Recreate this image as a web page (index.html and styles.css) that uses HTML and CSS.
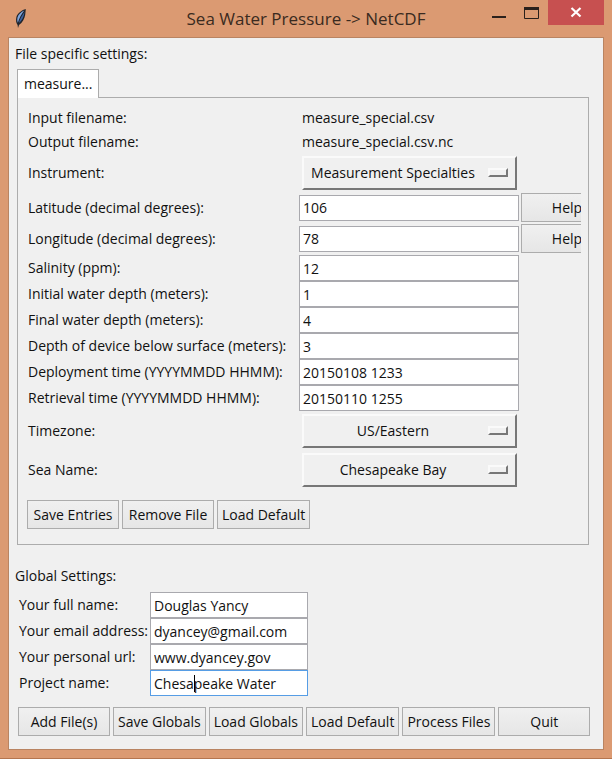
FILE: index.html
```
<!DOCTYPE html>
<html lang="en">
<head>
<meta charset="utf-8">
<title>Sea Water Pressure -&gt; NetCDF</title>
<link rel="stylesheet" href="styles.css">
</head>
<body>
<div class="window">
  <header class="titlebar">
    <svg class="feather" width="14" height="22" viewBox="0 0 14 22" aria-hidden="true">
      <path d="M11.800 1C8 2 3.600 5 2.400 9C1.700 12 2 15 3.600 17L4 20L5 17C8.500 14.500 10.500 10.500 11.200 7C11.500 5 11.500 3 11.800 1Z" fill="#20242c"/>
      <path d="M10.300 2.500C7 4 4.300 6.500 3.500 9.500C3 12 3.300 13.500 3.900 14.800C5 10.500 7.500 6 10.300 2.500Z" fill="#7fa6de"/>
      <path d="M10.500 4C8 7.500 5.800 11 4.900 15C7.800 12.500 9.900 9 10.500 4Z" fill="#3c62a0"/>
    </svg>
    <h1 class="title">Sea Water Pressure -&gt; NetCDF</h1>
    <div class="controls">
      <button class="control" type="button" aria-label="Minimize"><svg width="16" height="16" viewBox="0 0 16 16"><path d="M0 11h14v2H0z" fill="#2b211c"/></svg></button>
      <button class="control" type="button" aria-label="Maximize"><svg width="16" height="16" viewBox="0 0 16 16"><path d="M.5 2.500h14v11H.5z" fill="none" stroke="#2b211c"/><path d="M0 2h15v3H0z" fill="#2b211c"/></svg></button>
      <button class="control close" type="button" aria-label="Close"><svg width="12" height="12" viewBox="0 0 12 12"><path d="M1.500 1L10.500 9.500M10.500 1L1.500 9.500" stroke="#fff" stroke-width="2.200"/></svg></button>
    </div>
  </header>
  <main class="client">
    <h2 class="heading">File specific settings:</h2>
    <div class="tabs"><button class="tab" type="button">measure...</button></div>
    <form class="panel">
      <div class="fields">
        <div class="row text"><span>Input filename:</span><span class="value">measure_special.csv</span></div>
        <div class="row text"><span>Output filename:</span><span class="value">measure_special.csv.nc</span></div>
        <div class="row menu first"><label for="instrument">Instrument:</label><span class="option"><select id="instrument"><option>Measurement Specialties</option></select></span></div>
        <div class="row tall"><label for="lat">Latitude (decimal degrees):</label><input id="lat" type="text" value="106"><button class="button" type="button">Help</button></div>
        <div class="row tall"><label for="lon">Longitude (decimal degrees):</label><input id="lon" type="text" value="78"><button class="button" type="button">Help</button></div>
        <div class="row"><label for="salinity">Salinity (ppm):</label><input id="salinity" type="text" value="12"></div>
        <div class="row"><label for="initial">Initial water depth (meters):</label><input id="initial" type="text" value="1"></div>
        <div class="row"><label for="final">Final water depth (meters):</label><input id="final" type="text" value="4"></div>
        <div class="row"><label for="device">Depth of device below surface (meters):</label><input id="device" type="text" value="3"></div>
        <div class="row"><label for="deploy">Deployment time (YYYYMMDD HHMM):</label><input id="deploy" type="text" value="20150108 1233"></div>
        <div class="row"><label for="retrieve">Retrieval time (YYYYMMDD HHMM):</label><input id="retrieve" type="text" value="20150110 1255"></div>
        <div class="row menu"><label for="tz">Timezone:</label><span class="option"><select id="tz"><option>US/Eastern</option></select></span></div>
        <div class="row menu"><label for="sea">Sea Name:</label><span class="option"><select id="sea"><option>Chesapeake Bay</option></select></span></div>
      </div>
      <div class="buttons">
        <button class="button" type="button">Save Entries</button>
        <button class="button" type="button">Remove File</button>
        <button class="button" type="button">Load Default</button>
      </div>
    </form>
    <h2 class="heading global-heading">Global Settings:</h2>
    <form class="globals">
      <div class="row"><label for="name">Your full name:</label><input id="name" type="text" value="Douglas Yancy"></div>
      <div class="row"><label for="email">Your email address:</label><input id="email" type="text" value="dyancey@gmail.com"></div>
      <div class="row"><label for="url">Your personal url:</label><input id="url" type="text" value="www.dyancey.gov"></div>
      <div class="row"><label for="project">Project name:</label><span class="editing"><input id="project" type="text" value="Chesapeake Water"><span class="caret"></span></span></div>
    </form>
    <div class="buttons global-buttons">
      <button class="button" type="button">Add File(s)</button>
      <button class="button" type="button">Save Globals</button>
      <button class="button" type="button">Load Globals</button>
      <button class="button" type="button">Load Default</button>
      <button class="button" type="button">Process Files</button>
      <button class="button" type="button">Quit</button>
    </div>
  </main>
</div>
</body>
</html>
```
FILE: styles.css
```
*, ::after { box-sizing: border-box; }
body {
  margin: 0;
  background: #db9a72;
  color: #111;
  font: 14px/20px "Open Sans", "Noto Sans", sans-serif;
}
input, select, button { font: inherit; color: inherit; margin: 0; border-radius: 0; }
.window {
  display: flex;
  flex-direction: column;
  min-height: 100vh;
  padding: 0 8px 8px;
  border-bottom: 1px solid #b4754f;
}
.titlebar {
  display: grid;
  grid-template-columns: 120px 1fr 120px;
  height: 37px;
}
.feather { margin: 8px 0 0 6px; }
.title {
  margin: 0;
  text-align: center;
  font-size: 17px;
  font-weight: 400;
  line-height: 38px;
  color: #3a2a20;
  white-space: nowrap;
}
.controls { display: flex; justify-content: flex-end; align-items: flex-start; }
.control {
  display: flex;
  align-items: center;
  justify-content: center;
  width: 32px;
  height: 25px;
  padding: 0;
  border: 0;
  background: none;
}
.close { width: 56px; background: #c75050; }
.client {
  flex: 1;
  padding: 6px 14px 13px 8px;
  border: 1px solid #b98462;
  background: #f0f0f0;
}
.heading { margin: 0 0 0 -2px; font-size: 14px; font-weight: 400; }
.tabs { display: flex; margin: 5px 0 -1px; }
.tab {
  position: relative;
  height: 29px;
  padding: 0 6px;
  border: 1px solid #acacac;
  border-bottom: 0;
  background: #fff;
}
.panel { padding: 8px 7px 15px 9px; border: 1px solid #acacac; }
.fields { overflow: hidden; padding-left: 1px; }
.row {
  display: grid;
  grid-template-columns: 271px 220px 92px;
  align-items: center;
  height: 26px;
  white-space: nowrap;
}
.text { height: 24px; }
.value { padding-left: 3px; }
.tall { height: 31px; }
.tall + .row:not(.tall) { margin-top: 1px; }
.menu { height: 39px; }
.first { height: 37px; margin-bottom: 1px; }
input {
  display: block;
  width: 100%;
  height: 26px;
  padding: 0 3px;
  border: 1px solid #a9a9ae;
  background: #fff;
}
.tall .button { margin-left: 2px; }
.option { position: relative; margin: 0 2px 0 3px; }
.option::after {
  content: "";
  position: absolute;
  top: 12px;
  right: 9px;
  width: 20px;
  height: 9px;
  border: 2px solid;
  border-color: #fafafa #777 #777 #fafafa;
  pointer-events: none;
}
select {
  appearance: none;
  display: block;
  width: 100%;
  height: 34px;
  padding: 0 33px 0 0;
  border: 2px solid;
  border-color: #fafafa #777 #777 #fafafa;
  background: #f0f0f0;
  text-align: center;
  text-align-last: center;
}
.buttons { display: flex; gap: 3px; margin-top: 11px; }
.button {
  min-width: 92px;
  height: 29px;
  padding: 0 4px;
  border: 1px solid #acacac;
  background: linear-gradient(#f0f0f0, #e6e6e6);
  white-space: nowrap;
}
.global-heading { margin-top: 21px; }
.globals { margin: 6px 0 0 2px; }
.globals .row { grid-template-columns: 131px 158px; }
.editing { position: relative; }
.editing input { border-color: #569de5; }
.caret {
  position: absolute;
  top: 5px;
  left: 44px;
  width: 1px;
  height: 17px;
  background: #000;
}
.global-buttons { margin: 11px 0 0 1px; }
.global-buttons .button { flex: 1 0 auto; }
```
